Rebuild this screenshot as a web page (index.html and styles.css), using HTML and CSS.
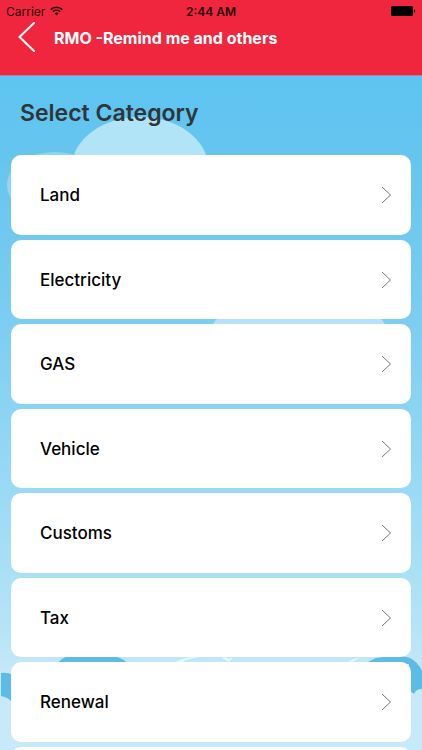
FILE: index.html
```
<!DOCTYPE html>
<html lang="en">
  <head>
    <meta charset="UTF-8" />
    <meta name="viewport" content="width=device-width, initial-scale=1.0" />
    <title>RMO - Select Category</title>
    <link rel="stylesheet" href="styles.css">
  </head>
  <body>
    <header>
      <div class="status-bar">
        <div class="carrier">
          <span>Carrier</span>
          <svg width="13" height="10" viewBox="0 0 13 10" fill="none" stroke="#2b060b" stroke-width="1.6">
            <path d="M0.7 3.6a8.2 8.2 0 0 1 11.6 0" />
            <path d="M2.8 5.7a5.2 5.2 0 0 1 7.4 0" />
            <path d="M6.5 9.5L4.5 7.4a2.8 2.8 0 0 1 4 0z" fill="#2b060b" stroke="none" />
          </svg>
        </div>
        <span class="time">2:44 AM</span>
        <div class="battery">
          <svg width="25" height="10" viewBox="0 0 25 10">
            <rect width="22" height="10" rx="1.5" />
            <path d="M23 3.3a1.8 1.8 0 0 1 0 3.4z" />
          </svg>
        </div>
      </div>
      <div class="nav-bar">
        <button class="back" aria-label="Back">
          <svg width="18" height="30" viewBox="0 0 18 30" fill="none" stroke="#fff" stroke-width="2" stroke-linecap="round" stroke-linejoin="round">
            <path d="M16 1L1.5 15L16 29" />
          </svg>
        </button>
        <h1>RMO -Remind me and others</h1>
      </div>
    </header>
    <main>
      <!-- sky and clouds behind the list -->
      <svg class="sky" viewBox="0 0 422 675" preserveAspectRatio="xMidYMin slice" aria-hidden="true">
        <ellipse cx="55" cy="109" rx="48" ry="33" fill="#90d5f4" />
        <ellipse cx="140" cy="91" rx="68" ry="50" fill="#b2e4f8" />
        <ellipse cx="218" cy="94" rx="32" ry="14" fill="#90d5f4" />
        <path d="M212 250q4-8 10-10h154q6 2 10 10z" fill="#b5e1fa" />
        <path d="M55 591q5-10 16-11h42q12 2 17 11z" fill="#5dbbe7" />
        <path d="M1 597q7-1 12 2v29q-4-7-12-8z" fill="#5dbbe7" />
        <path d="M172 588q8-5 18-7l12-1-16 4-6 4z" fill="#e6f6fd" />
        <path d="M222 582l3-2 3 3 5-2-4 5z" fill="#e6f6fd" />
        <path d="M346 588q5-6 14-6l-6 3-5 3z" fill="#e4f5fd" />
        <path d="M364 588l12-6q24-4 34 0q8 4 12 13v18q-6 0-8 5l-5-4v-26z" fill="#5dbbe7" />
      </svg>
      <h2>Select Category</h2>
      <ul class="categories">
        <li>
          <button>
            Land
            <svg width="11" height="18" viewBox="0 0 11 18"><path d="M1 1l8.5 8L1 17" /></svg>
          </button>
        </li>
        <li>
          <button>
            Electricity
            <svg width="11" height="18" viewBox="0 0 11 18"><path d="M1 1l8.5 8L1 17" /></svg>
          </button>
        </li>
        <li>
          <button>
            GAS
            <svg width="11" height="18" viewBox="0 0 11 18"><path d="M1 1l8.5 8L1 17" /></svg>
          </button>
        </li>
        <li>
          <button>
            Vehicle
            <svg width="11" height="18" viewBox="0 0 11 18"><path d="M1 1l8.5 8L1 17" /></svg>
          </button>
        </li>
        <li>
          <button>
            Customs
            <svg width="11" height="18" viewBox="0 0 11 18"><path d="M1 1l8.5 8L1 17" /></svg>
          </button>
        </li>
        <li>
          <button>
            Tax
            <svg width="11" height="18" viewBox="0 0 11 18"><path d="M1 1l8.5 8L1 17" /></svg>
          </button>
        </li>
        <li>
          <button>
            Renewal
            <svg width="11" height="18" viewBox="0 0 11 18"><path d="M1 1l8.5 8L1 17" /></svg>
          </button>
        </li>
        <li><button></button></li>
      </ul>
    </main>
  </body>
</html>
```
FILE: styles.css
```
* {
  box-sizing: border-box;
}
body {
  display: flex;
  flex-direction: column;
  height: 100vh;
  margin: 0;
  overflow: hidden;
  font-family: Inter, "Liberation Sans", sans-serif;
}
button {
  border: none;
  cursor: pointer;
  font-family: inherit;
}
svg {
  display: block;
}
header {
  flex: none;
  background-color: #ef263d;
  border-bottom: 1px solid #b57fa5;
}
.status-bar {
  display: grid;
  grid-template-columns: 1fr auto 1fr;
  align-items: center;
  height: 22px;
  padding: 0 6px;
  color: #2b060b;
  font-size: 12px;
}
.carrier {
  display: flex;
  align-items: center;
  gap: 5px;
}
.time {
  font-weight: 600;
}
.battery {
  justify-self: end;
}
.nav-bar {
  display: flex;
  align-items: flex-start;
  gap: 18px;
  height: 53px;
  padding-left: 18px;
}
.back {
  padding: 0;
  background: none;
}
h1 {
  margin: 0;
  color: #fff;
  font-size: 16px;
  font-weight: 700;
  line-height: 32px;
}
main {
  position: relative;
  flex: 1;
  min-height: 0;
  overflow: hidden;
  background: linear-gradient(#5dc4f1, #66c5ef 12%, #7ccdf1 36%, #9bdaf5 62%, #b5e4f6 82%, #c8e9f9 90%, #c8e9f9);
}
/* Lies behind the list */
.sky {
  position: absolute;
  top: 0;
  left: 0;
  width: 100%;
  height: 100%;
}
h2 {
  position: relative;
  margin: 0;
  padding: 20px 20px 24px;
  color: #2f3538;
  font-size: 23px;
  font-weight: 600;
  line-height: 35px;
}
.categories {
  position: relative;
  display: flex;
  flex-direction: column;
  gap: 5px;
  margin: 0;
  padding: 0 11px;
  list-style: none;
}
.categories button {
  display: flex;
  justify-content: space-between;
  align-items: center;
  width: 100%;
  height: 80px;
  padding: 0 19px 0 29px;
  border-radius: 10px;
  background-color: #fff;
  color: #000;
  font-size: 17px;
  font-weight: 500;
  text-align: left;
}
.categories li:nth-child(even) button {
  height: 79px;
}
.categories path {
  fill: none;
  stroke: #777;
  stroke-width: 1;
}
```
